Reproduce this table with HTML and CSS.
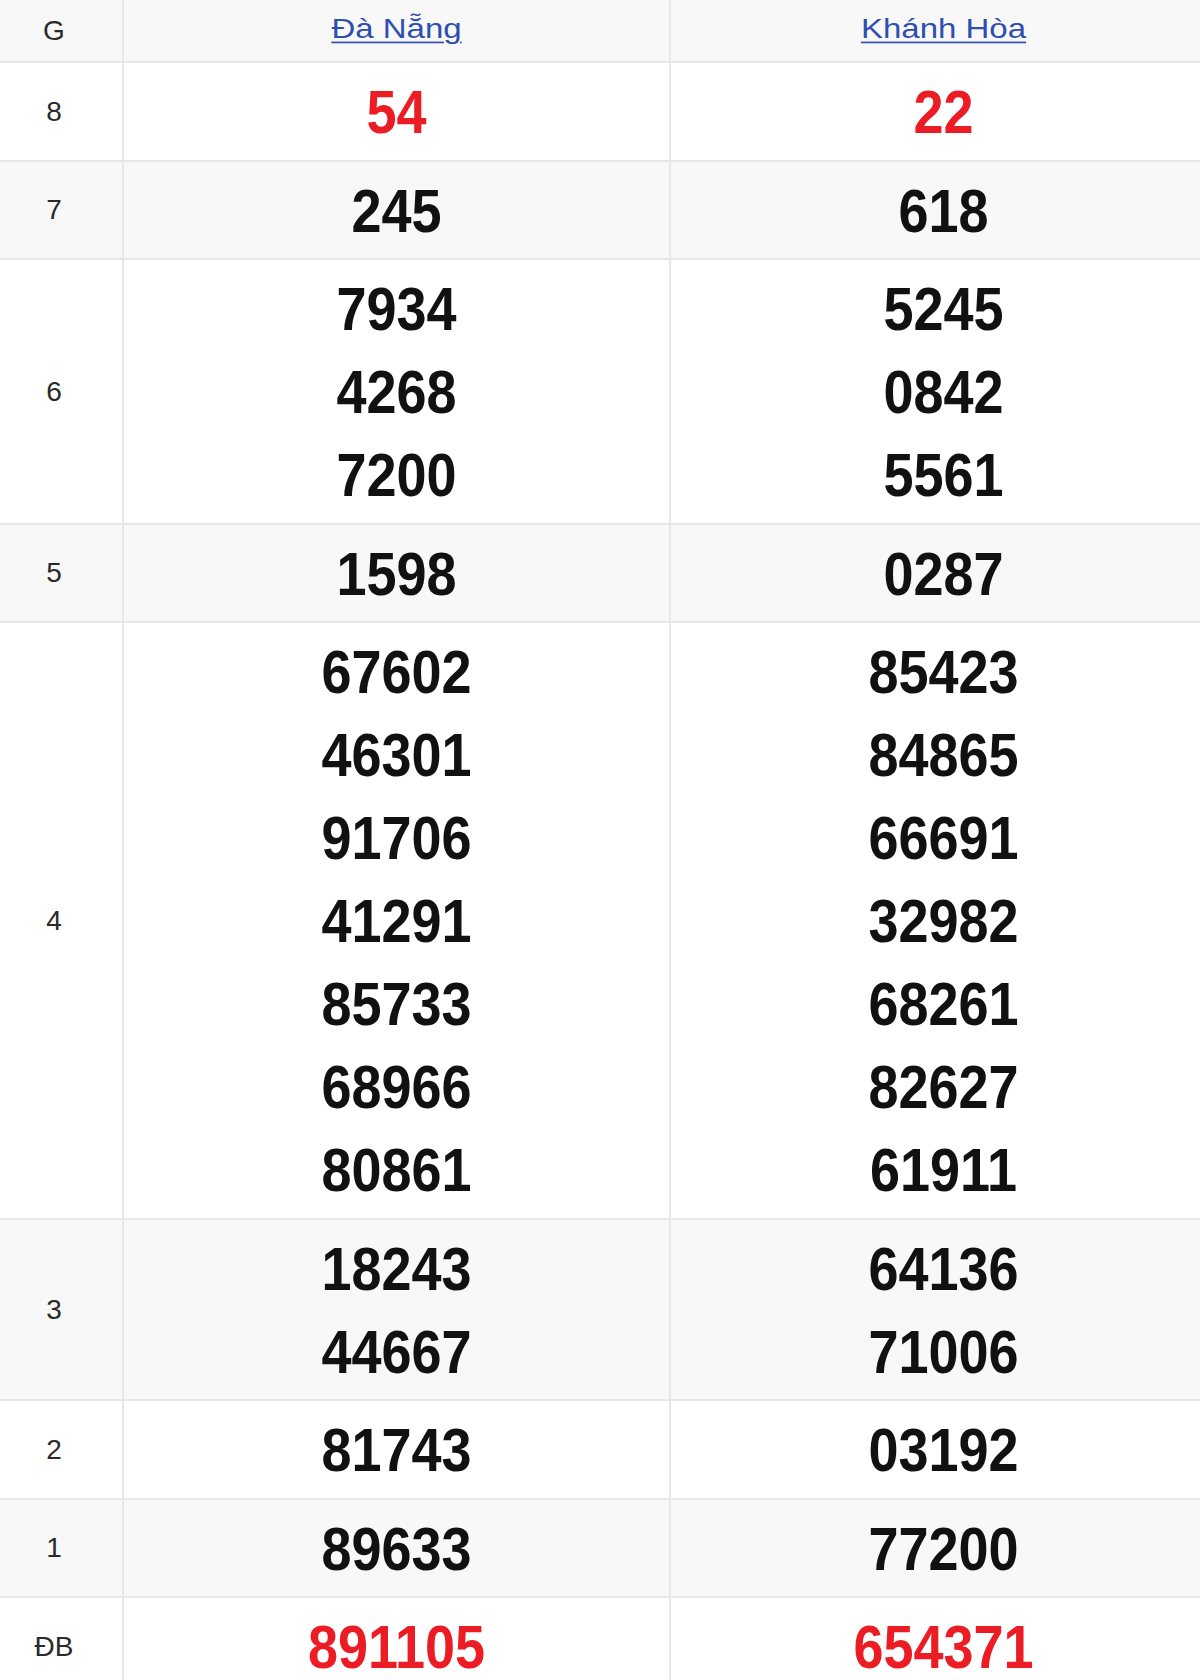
FILE: index.html
```html
<!DOCTYPE html>
<html lang="vi">
<head>
<meta charset="utf-8">
<title>Kết quả xổ số</title>
<link rel="stylesheet" href="styles.css">
</head>
<body>
<table class="kq">
  <colgroup>
    <col class="c-label">
    <col class="c-prov">
    <col class="c-prov">
  </colgroup>
  <thead>
    <tr class="head">
      <th class="label">G</th>
      <th><a href="#" class="prov">Đà Nẵng</a></th>
      <th><a href="#" class="prov">Khánh Hòa</a></th>
    </tr>
  </thead>
  <tbody>
    <tr>
      <td class="label">8</td>
      <td><div class="num red">54</div></td>
      <td><div class="num red">22</div></td>
    </tr>
    <tr class="alt">
      <td class="label">7</td>
      <td><div class="num">245</div></td>
      <td><div class="num">618</div></td>
    </tr>
    <tr>
      <td class="label">6</td>
      <td><div class="num">7934</div><div class="num">4268</div><div class="num">7200</div></td>
      <td><div class="num">5245</div><div class="num">0842</div><div class="num">5561</div></td>
    </tr>
    <tr class="alt">
      <td class="label">5</td>
      <td><div class="num">1598</div></td>
      <td><div class="num">0287</div></td>
    </tr>
    <tr>
      <td class="label">4</td>
      <td>
        <div class="num">67602</div><div class="num">46301</div><div class="num">91706</div><div class="num">41291</div><div class="num">85733</div><div class="num">68966</div><div class="num">80861</div>
      </td>
      <td>
        <div class="num">85423</div><div class="num">84865</div><div class="num">66691</div><div class="num">32982</div><div class="num">68261</div><div class="num">82627</div><div class="num">61911</div>
      </td>
    </tr>
    <tr class="alt">
      <td class="label">3</td>
      <td><div class="num">18243</div><div class="num">44667</div></td>
      <td><div class="num">64136</div><div class="num">71006</div></td>
    </tr>
    <tr>
      <td class="label">2</td>
      <td><div class="num">81743</div></td>
      <td><div class="num">03192</div></td>
    </tr>
    <tr class="alt">
      <td class="label">1</td>
      <td><div class="num">89633</div></td>
      <td><div class="num">77200</div></td>
    </tr>
    <tr>
      <td class="label">ĐB</td>
      <td><div class="num red">891105</div></td>
      <td><div class="num red">654371</div></td>
    </tr>
  </tbody>
</table>
</body>
</html>
```
FILE: styles.css
```css
html, body {
  margin: 0;
  padding: 0;
  background: #ffffff;
  overflow: hidden;
}

body {
  font-family: "Liberation Sans", Arial, sans-serif;
  color: #111;
}

.kq {
  width: 1217px;
  border-collapse: collapse;
  table-layout: fixed;
}

.c-label { width: 123px; }
.c-prov { width: 547px; }

.kq th,
.kq td {
  border: 2px solid #e6e7eb;
  text-align: center;
  vertical-align: middle;
  padding: 7px 0 6.5px;
}

.kq thead th { border-top: 0; }

.kq th:first-child,
.kq td:first-child { border-left: 0; }

.head th {
  height: 58px;
  background: #f8f8f9;
  font-weight: normal;
  padding: 0 0 3px;
}

.alt td { background: #f8f8f9; }

.kq .label {
  font-size: 28px;
  color: #2a2a2a;
  padding-right: 14px;
}

.kq .head .label {
  padding-bottom: 0;
}

.prov {
  display: inline-block;
  font-size: 33px;
  color: #2f4fae;
  text-decoration: underline;
  text-decoration-thickness: 2px;
  text-underline-offset: 4px;
  transform: scaleY(0.84);
}

.num {
  font-size: 54px;
  font-weight: bold;
  line-height: 83px;
  color: #111;
  transform: scaleY(1.14);
}

.num.red { color: #ec1c24; }
```
